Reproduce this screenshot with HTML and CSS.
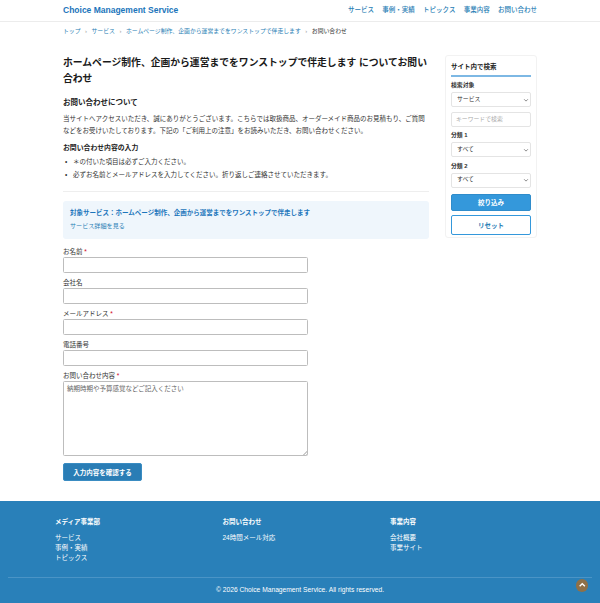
FILE: index.html
```html
<!DOCTYPE html>
<html lang="ja">
<head>
<meta charset="utf-8">
<title>お問い合わせ</title>
<link rel="stylesheet" href="styles.css">
</head>
<body>
<header class="site-header">
  <div class="wrap header-inner">
    <a class="logo">Choice Management Service</a>
    <nav class="nav">
      <a>サービス</a><a>事例・実績</a><a>トピックス</a><a>事業内容</a><a>お問い合わせ</a>
    </nav>
  </div>
</header>
<div class="wrap crumbs">
  <a>トップ</a><span class="sep">›</span><a>サービス</a><span class="sep">›</span><a>ホームページ制作、企画から運営までをワンストップで伴走します</a><span class="sep">›</span><span class="current">お問い合わせ</span>
</div>
<div class="wrap layout">
  <main class="main">
    <h1>ホームページ制作、企画から運営までをワンストップで伴走します についてお問い合わせ</h1>
    <h2>お問い合わせについて</h2>
    <p class="lead">当サイトへアクセスいただき、誠にありがとうございます。こちらでは取扱商品、オーダーメイド商品のお見積もり、ご質問などをお受けいたしております。下記の「ご利用上の注意」をお読みいただき、お問い合わせください。</p>
    <h3>お問い合わせ内容の入力</h3>
    <ul class="notes">
      <li>＊の付いた項目は必ずご入力ください。</li>
      <li>必ずお名前とメールアドレスを入力してください。折り返しご連絡させていただきます。</li>
    </ul>
    <hr class="rule">
    <div class="notice">
      <p class="notice-title">対象サービス：ホームページ制作、企画から運営までをワンストップで伴走します</p>
      <a class="notice-link">サービス詳細を見る</a>
    </div>
    <form class="form">
      <label class="field"><span>お名前 <b>*</b></span><input type="text"></label>
      <label class="field"><span>会社名</span><input type="text"></label>
      <label class="field"><span>メールアドレス <b>*</b></span><input type="text"></label>
      <label class="field"><span>電話番号</span><input type="text"></label>
      <label class="field"><span>お問い合わせ内容 <b>*</b></span><textarea placeholder="納期時期や予算感覚などご記入ください"></textarea></label>
      <button type="button" class="submit">入力内容を確認する</button>
    </form>
  </main>
  <aside class="side">
    <h4>サイト内で検索</h4>
    <label class="side-label">検索対象</label>
    <div class="select"><span>サービス</span><svg viewBox="0 0 8 8" class="chev"><path d="M1.500 3l2.500 2.500L6.500 3" fill="none" stroke="#666" stroke-width="1"/></svg></div>
    <input class="keyword" type="text" placeholder="キーワードで検索">
    <label class="side-label">分類 1</label>
    <div class="select"><span>すべて</span><svg viewBox="0 0 8 8" class="chev"><path d="M1.500 3l2.500 2.500L6.500 3" fill="none" stroke="#666" stroke-width="1"/></svg></div>
    <label class="side-label">分類 2</label>
    <div class="select"><span>すべて</span><svg viewBox="0 0 8 8" class="chev"><path d="M1.500 3l2.500 2.500L6.500 3" fill="none" stroke="#666" stroke-width="1"/></svg></div>
    <button type="button" class="btn-primary">絞り込み</button>
    <button type="button" class="btn-outline">リセット</button>
  </aside>
</div>
<footer class="footer">
  <div class="footer-cols">
    <div class="fcol"><h5>メディア事業部</h5><a>サービス</a><a>事例・実績</a><a>トピックス</a></div>
    <div class="fcol"><h5>お問い合わせ</h5><a>24時間メール対応</a></div>
    <div class="fcol"><h5>事業内容</h5><a>会社概要</a><a>事業サイト</a></div>
  </div>
  <div class="copy">© 2026 Choice Management Service. All rights reserved.</div>
  <a class="to-top"><svg viewBox="0 0 12 12"><path d="M3.500 7l2.500-2.500L8.500 7" fill="none" stroke="#fff" stroke-width="1.300"/></svg></a>
</footer>
</body>
</html>
```
FILE: styles.css
```css
* { box-sizing: border-box; }
html, body { margin: 0; padding: 0; }
body {
  font-family: "Liberation Sans", "Noto Sans CJK JP", sans-serif;
  font-size: 6.5px;
  line-height: 1.6;
  color: #333;
  background: #fff;
  position: relative;
  height: 603px;
  overflow: hidden;
}
.wrap { width: 474px; margin: 0 auto; }
.site-header { height: 22px; border-bottom: 1px solid #ececec; }
.header-inner { height: 21px; display: flex; justify-content: space-between; align-items: center; }
.logo { font-size: 8.5px; font-weight: 700; color: #1b75bb; }
.nav { display: flex; gap: 8.3px; font-size: 6.5px; font-weight: 500; color: #2a80b5; }
.crumbs { display: flex; align-items: center; height: 20px; font-size: 5.85px; color: #2a80b5; }
.crumbs .sep { width: 11px; text-align: center; color: #999; }
.crumbs .current { color: #333; }
.layout { display: flex; justify-content: space-between; align-items: flex-start; padding-top: 12.5px; }
.main { width: 366px; }
h1 { margin: 0; font-size: 9.8px; line-height: 16.4px; font-weight: 700; color: #1a1a1a; }
h2 { margin: 9.4px 0 0; font-size: 7.5px; line-height: 12px; font-weight: 700; color: #222; }
.lead { margin: 3.800px 0 0; line-height: 12px; }
h3 { margin: 5.500px 0 0; font-size: 6.85px; line-height: 12px; font-weight: 700; color: #222; }
.notes { margin: 0.500px 0 0; padding: 0; list-style: none; line-height: 13px; }
.notes li { display: flex; }
.notes li::before { content: "•"; width: 8px; padding-left: 2px; flex: none; }
.rule { margin: 10px 0 0; border: 0; border-top: 1px solid #eee; }
.notice { margin-top: 9.500px; height: 37.500px; padding: 5px 7px; background: #eff6fc; border-radius: 3px; }
.notice-title { margin: 0; line-height: 13px; font-weight: 700; color: #1b75bb; }
.notice-link { display: block; font-size: 6.1px; line-height: 13px; color: #2a80b5; }
.form { margin-top: 7px; }
.field { display: block; margin-bottom: 4px; }
.field span { display: block; line-height: 11px; }
.field b { color: #d0021b; font-weight: 400; }
.field input, .field textarea {
  display: block; width: 245px; height: 16px; margin: 0;
  border: 1px solid #bdbdbd; border-radius: 1.500px; background: #fff;
}
.field textarea {
  height: 75px; padding: 2px 3px; font: 6.5px/10px "Liberation Sans", "Noto Sans CJK JP", sans-serif;
}
.field textarea::placeholder { color: #666; }
.field textarea::-webkit-resizer {
  background: linear-gradient(135deg, transparent 50%, #ccc 50%, #ccc 65%, transparent 65%, transparent 80%, #ccc 80%) no-repeat right bottom / 4px 4px;
}
.submit {
  display: block; width: 79px; height: 18px; margin-top: 7px; padding: 0;
  border: 1px solid #3a8cc2; border-radius: 2px; background: #2a7db5; color: #fff;
  font: 700 6.5px "Liberation Sans", "Noto Sans CJK JP", sans-serif;
}
.side {
  width: 92px; height: 183px; margin-top: 0.500px; padding: 5px 5px 4px; background: #fff;
  border: 1px solid #f2f2f2; border-radius: 3px;
}
h4 { margin: 0; padding-bottom: 2.500px; font-size: 6.5px; line-height: 11px; font-weight: 700; color: #222; border-bottom: 2px solid #7db8e4; }
.side-label { display: block; margin-top: 4.500px; font-size: 5.85px; line-height: 9px; font-weight: 700; }
.select {
  display: flex; align-items: center; justify-content: space-between; height: 15px; padding: 0 1px 0 5px;
  margin-top: 2px; border: 1px solid #e4e4e4; border-radius: 2px; font-size: 5.85px;
}
.chev { width: 6px; height: 6px; }
.keyword {
  display: block; width: 100%; height: 15px; margin: 4.500px 0 0; padding: 0 4px;
  border: 1px solid #e4e4e4; border-radius: 2px; font: 5.85px "Liberation Sans", "Noto Sans CJK JP", sans-serif;
}
.keyword::placeholder { color: #aaa; }
.btn-primary, .btn-outline {
  display: block; width: 100%; padding: 0; border-radius: 2px;
  font: 700 6.5px "Liberation Sans", "Noto Sans CJK JP", sans-serif;
}
.btn-primary { height: 17.500px; margin-top: 6px; background: #3498db; border: 1px solid #2f8ccb; color: #fff; }
.btn-outline { height: 20px; margin-top: 3.500px; background: #fff; border: 1px solid #3498db; color: #2a80b5; }
.footer {
  position: absolute; left: 0; right: 0; top: 501px; height: 102px;
  background: #2980b9; color: #fff;
}
.footer-cols { display: flex; padding: 15px 0 0 55px; height: 75.500px; }
.fcol { width: 167.500px; display: flex; flex-direction: column; line-height: 10.4px; }
.fcol h5 { margin: 0 0 4.500px; font-size: 6.5px; line-height: 12px; font-weight: 700; }
.copy {
  margin: 0 8px; padding-top: 6px; border-top: 1px solid #4a94c6;
  text-align: center; font-size: 6.7px; line-height: 11px;
}
.to-top {
  position: absolute; left: 575.500px; top: 78px; width: 12.500px; height: 12.500px;
  border-radius: 50%; background: #8e7048; display: flex;
}
```
